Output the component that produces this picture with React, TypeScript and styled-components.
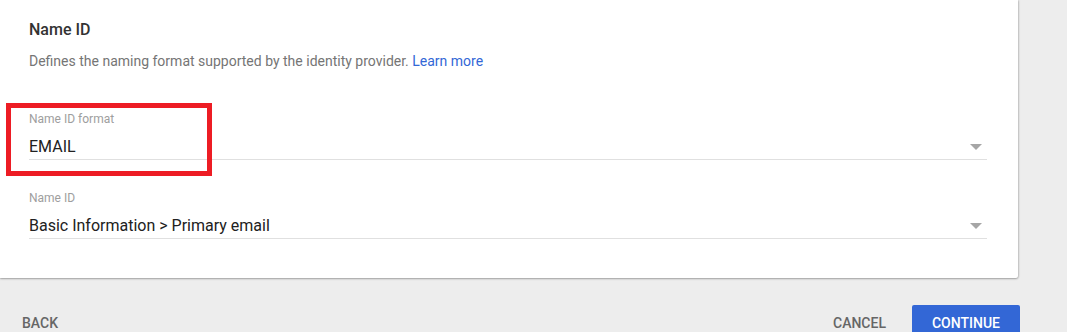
import React from "react";
import styled, { createGlobalStyle } from "styled-components";

const GlobalStyle = createGlobalStyle`
  html, body {
    margin: 0;
    padding: 0;
    background: #ededed;
    font-family: Roboto, "Liberation Sans", Arial, sans-serif;
    overflow: hidden;
  }
`;

interface SelectFieldProps {
  label: string;
  value: string;
  highlighted?: boolean;
}

function SelectField({ label, value, highlighted }: SelectFieldProps) {
  return (
    <StyledField>
      {highlighted && <StyledHighlight />}
      <StyledLabel>{label}</StyledLabel>
      <StyledSelectRow>
        <StyledValue>{value}</StyledValue>
        <StyledArrow />
      </StyledSelectRow>
    </StyledField>
  );
}

export default function App() {
  return (
    <>
      <GlobalStyle />
      <StyledPage>
        <StyledCard>
          <StyledTitle>Name ID</StyledTitle>
          <StyledDescription>
            Defines the naming format supported by the identity provider.{" "}
            <StyledLink href="#">Learn more</StyledLink>
          </StyledDescription>
          <StyledFields>
            <SelectField label="Name ID format" value="EMAIL" highlighted />
            <SelectField
              label="Name ID"
              value="Basic Information > Primary email"
            />
          </StyledFields>
        </StyledCard>
        <StyledFooter>
          <StyledTextButton>Back</StyledTextButton>
          <StyledActions>
            <StyledTextButton>Cancel</StyledTextButton>
            <StyledPrimaryButton>Continue</StyledPrimaryButton>
          </StyledActions>
        </StyledFooter>
      </StyledPage>
    </>
  );
}

const StyledPage = styled.div`
  width: 1020px;
`;

const StyledCard = styled.div`
  width: 1018px;
  box-sizing: border-box;
  background: #ffffff;
  padding: 20px 31px 39px 29px;
  border-radius: 0 0 2px 0;
  box-shadow: 0 1px 2px rgba(0, 0, 0, 0.3), 1px 0 2px rgba(0, 0, 0, 0.12);
`;

const StyledTitle = styled.div`
  font-size: 16px;
  line-height: 20px;
  font-weight: 500;
  color: #333333;
`;

const StyledDescription = styled.div`
  margin-top: 11px;
  font-size: 14px;
  line-height: 20px;
  color: #757575;
`;

const StyledLink = styled.a`
  color: #3367d6;
  text-decoration: none;
`;

const StyledFields = styled.div`
  margin-top: 40px;
  display: flex;
  flex-direction: column;
  gap: 30px;
`;

const StyledField = styled.div`
  position: relative;
  display: flex;
  flex-direction: column;
`;

const StyledHighlight = styled.div`
  position: absolute;
  left: -23px;
  top: -8px;
  width: 206px;
  height: 73px;
  box-sizing: border-box;
  border: 5px solid #ed1c24;
  pointer-events: none;
`;

const StyledLabel = styled.div`
  font-size: 12px;
  line-height: 16px;
  color: #9e9e9e;
  margin-bottom: 8px;
`;

const StyledSelectRow = styled.div`
  display: flex;
  align-items: center;
  justify-content: space-between;
  height: 24px;
  border-bottom: 1px solid #e0e0e0;
`;

const StyledValue = styled.span`
  font-size: 16px;
  line-height: 24px;
  color: #212121;
`;

const StyledArrow = styled.span`
  width: 0;
  height: 0;
  margin-right: 5px;
  margin-top: -1px;
  border-left: 6px solid transparent;
  border-right: 6px solid transparent;
  border-top: 6px solid #a6a6a6;
`;

const StyledFooter = styled.div`
  margin-top: 27px;
  display: flex;
  align-items: center;
  justify-content: space-between;
  padding-left: 14px;
`;

const StyledActions = styled.div`
  display: flex;
  align-items: center;
  gap: 18px;
`;

const StyledTextButton = styled.button`
  height: 36px;
  padding: 0 8px;
  border: none;
  background: transparent;
  font-family: inherit;
  font-size: 14px;
  font-weight: 500;
  text-transform: uppercase;
  color: #666666;
  cursor: pointer;
`;

const StyledPrimaryButton = styled.button`
  height: 36px;
  padding: 0 20px;
  border: none;
  border-radius: 2px;
  background: #3367d6;
  color: #ffffff;
  font-family: inherit;
  font-size: 14px;
  font-weight: 500;
  text-transform: uppercase;
  cursor: pointer;
`;
